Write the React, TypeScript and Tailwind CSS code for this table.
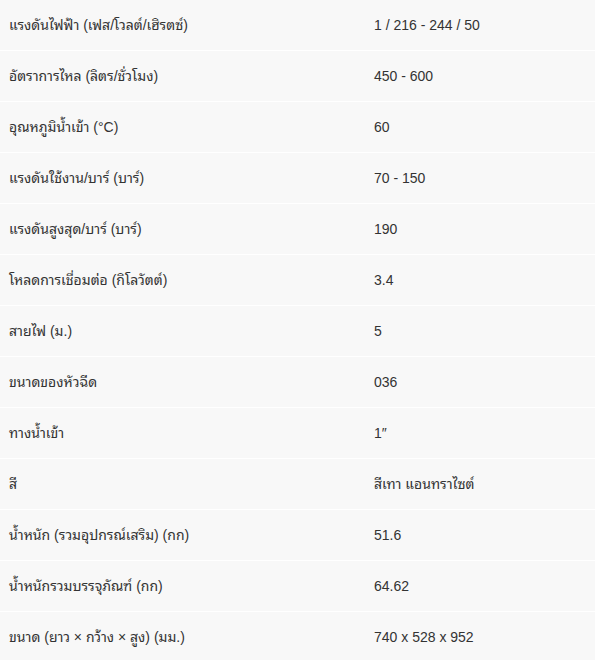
import React from "react";

const specs: [string, string][] = [
  ["แรงดันไฟฟ้า (เฟส/โวลต์/เฮิรตซ์)", "1 / 216 - 244 / 50"],
  ["อัตราการไหล (ลิตร/ชั่วโมง)", "450 - 600"],
  ["อุณหภูมิน้ำเข้า (°C)", "60"],
  ["แรงดันใช้งาน/บาร์ (บาร์)", "70 - 150"],
  ["แรงดันสูงสุด/บาร์ (บาร์)", "190"],
  ["โหลดการเชื่อมต่อ (กิโลวัตต์)", "3.4"],
  ["สายไฟ (ม.)", "5"],
  ["ขนาดของหัวฉีด", "036"],
  ["ทางน้ำเข้า", "1″"],
  ["สี", "สีเทา แอนทราไซต์"],
  ["น้ำหนัก (รวมอุปกรณ์เสริม) (กก)", "51.6"],
  ["น้ำหนักรวมบรรจุภัณฑ์ (กก)", "64.62"],
  ["ขนาด (ยาว × กว้าง × สูง) (มม.)", "740 x 528 x 952"],
];

const App = () => {
  return (
    <div className="w-[595px] h-[660px] overflow-hidden bg-white font-['Liberation_Sans','Noto_Sans_Thai_Looped',sans-serif] text-[14px] text-[#333333]">
      <div className="flex flex-col">
        {specs.map(([label, value]) => (
          <div
            key={label}
            className="flex h-[51px] shrink-0 border-b border-white bg-[#f8f8f8]"
          >
            <div className="w-[365px] pl-[9px] flex items-center">{label}</div>
            <div className="flex-1 pl-[9px] flex items-center">{value}</div>
          </div>
        ))}
      </div>
    </div>
  );
};

export default App;
